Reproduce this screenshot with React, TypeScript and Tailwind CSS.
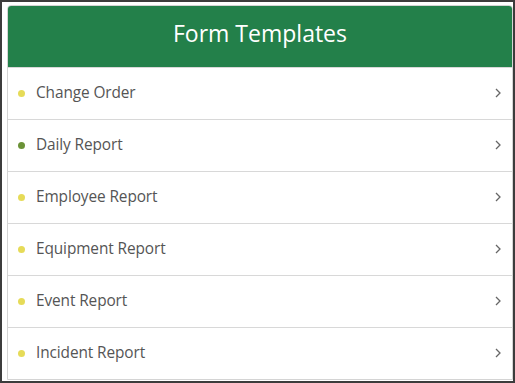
import React from "react";

const items = [
  { label: "Change Order", color: "bg-[#e6db58]" },
  { label: "Daily Report", color: "bg-[#6b9237]" },
  { label: "Employee Report", color: "bg-[#e6db58]" },
  { label: "Equipment Report", color: "bg-[#e6db58]" },
  { label: "Event Report", color: "bg-[#e6db58]" },
  { label: "Incident Report", color: "bg-[#e6db58]" },
];

function Chevron() {
  return (
    <svg width="6" height="10" viewBox="0 0 6 10" className="shrink-0">
      <path d="M1 1 L5 5 L1 9" fill="none" stroke="#666" strokeWidth="1.3" />
    </svg>
  );
}

export default function App() {
  return (
    <div
      className="w-[515px] h-[383px] border-2 border-[#3c3c3c] bg-white overflow-hidden pl-[5px] pt-[3px]"
      style={{ fontFamily: '"Open Sans", "Noto Sans", sans-serif' }}
    >
      <div className="w-[506px] border border-[#d4d4d4] rounded-t-[4px] bg-white">
        <div className="h-[61px] bg-[#23804a] rounded-t-[3px] flex items-center justify-center pb-[6px]">
          <span className="text-white text-[23px] leading-none">Form Templates</span>
        </div>
        {items.map((it) => (
          <div
            key={it.label}
            className="h-[52px] border-t border-[#d8d8d8] first:border-t-0 flex items-center pl-[10px] pr-[11px] pb-[1px]"
          >
            <span className={`w-[7px] h-[7px] rounded-full ${it.color}`} />
            <span className="ml-[11px] text-[15.4px] text-[#555] flex-1 tracking-[-0.1px]">
              {it.label}
            </span>
            <Chevron />
          </div>
        ))}
      </div>
    </div>
  );
}
